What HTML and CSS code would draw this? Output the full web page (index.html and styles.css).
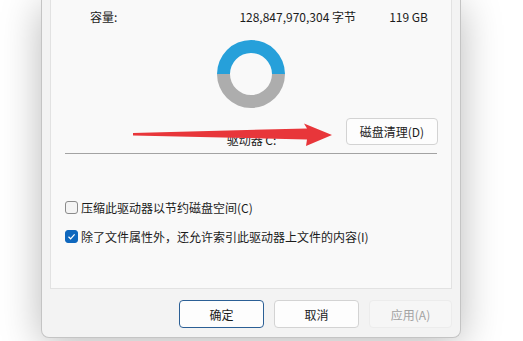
FILE: index.html
```html
<!DOCTYPE html>
<html lang="zh-CN">
<head>
    <meta charset="UTF-8">
    <title>本地磁盘 (C:) 属性</title>
    <link rel="stylesheet" href="styles.css">
</head>
<body>
    <div class="screen">
        <div class="window">
            <div class="panel">
                <div class="cap-row">
                    <span>容量:</span>
                    <span class="bytes">128,847,970,304 字节</span>
                    <span class="gb">119 GB</span>
                </div>

                <svg class="donut" width="68" height="68" viewBox="0 0 68 68">
                    <path d="M0 34 A34 34 0 0 1 68 34 L55 34 A21 21 0 0 0 13 34 Z" fill="#26a0da"/>
                    <path d="M0 34 A34 34 0 0 0 68 34 L55 34 A21 21 0 0 1 13 34 Z" fill="#adadad"/>
                </svg>

                <div class="drive-row">
                    <span class="drive-label">驱动器 C:</span>
                    <button class="btn cleanup">磁盘清理(D)</button>
                </div>

                <div class="sep"></div>

                <div class="options">
                    <label class="check">
                        <span class="box"></span>
                        压缩此驱动器以节约磁盘空间(C)
                    </label>
                    <label class="check">
                        <span class="box checked">
                            <svg width="9" height="9" viewBox="0 0 9 9"><path d="M1.5 4.8 L3.6 6.8 L7.6 2.4" fill="none" stroke="#fff" stroke-width="1.2"/></svg>
                        </span>
                        除了文件属性外，还允许索引此驱动器上文件的内容(I)
                    </label>
                </div>
            </div>

            <div class="footer">
                <button class="btn default">确定</button>
                <button class="btn">取消</button>
                <button class="btn disabled">应用(A)</button>
            </div>
        </div>

        <svg class="arrow" width="210" height="30" viewBox="0 0 210 30">
            <path d="M3 13 L177 8.5 L174 3.5 L202 15 L176 26 L177 19.5 L3 15.5 Z" fill="#e8363a"/>
        </svg>
    </div>
</body>
</html>
```

FILE: styles.css
```css
body {
    margin: 0;
    background: #fff;
    font-family: "Noto Sans CJK SC", "Noto Sans", sans-serif;
    font-size: 12px;
    color: #1b1b1b;
    overflow: hidden;
}
.screen {
    position: relative;
    width: 523px;
    height: 341px;
    padding-left: 41px;
    box-sizing: border-box;
}
.window {
    width: 420px;
    height: 338px;
    box-sizing: border-box;
    background: #f3f3f3;
    border: 1px solid #c4c4c4;
    border-top: none;
    border-radius: 0 0 8px 8px;
    box-shadow: 0 6px 40px rgba(0, 0, 0, 0.28);
    padding: 0 8px 0 8px;
    display: flex;
    flex-direction: column;
}
.panel {
    height: 289px;
    box-sizing: border-box;
    background: #f9f9f9;
    border: 1px solid #e2e2e2;
    border-top: none;
    padding: 0 14px;
    display: flex;
    flex-direction: column;
}
.cap-row {
    margin-top: 8px;
    height: 18px;
    line-height: 18px;
    padding-left: 25px;
    padding-right: 9px;
    display: grid;
    grid-template-columns: 1fr auto 72px;
}
.cap-row .gb {
    text-align: right;
}
.donut {
    display: block;
    margin: 14px auto 0;
}
.drive-row {
    margin-top: 10px;
    display: grid;
    grid-template-columns: 1fr auto 1fr;
    margin-right: -1px;
}
.drive-label {
    grid-column: 2;
    align-self: end;
    line-height: 14px;
    margin-bottom: -2px;
}
.cleanup {
    grid-column: 3;
    justify-self: end;
    width: 92px;
}
.btn {
    height: 27px;
    padding: 0;
    font-family: inherit;
    font-size: 12px;
    color: #1b1b1b;
    background: #fdfdfd;
    border: 1px solid #d3d3d3;
    border-radius: 4px;
}
.sep {
    margin-top: 8px;
    height: 1px;
    background: #a3a3a3;
}
.options {
    margin-top: 43px;
    display: flex;
    flex-direction: column;
    gap: 9px;
}
.check {
    height: 20px;
    display: flex;
    align-items: center;
    gap: 3px;
}
.box {
    width: 13px;
    height: 13px;
    box-sizing: border-box;
    border: 1px solid #8b8b8b;
    border-radius: 3px;
    background: #f4f4f4;
    display: flex;
    align-items: center;
    justify-content: center;
}
.box.checked {
    background: #0f67bd;
    border-color: #0f67bd;
}
.footer {
    margin-top: 11px;
    display: flex;
    justify-content: flex-end;
    gap: 10px;
}
.footer .btn {
    width: 85px;
    height: 28px;
}
.footer .btn:last-child {
    width: 83px;
}
.btn.default {
    border-color: #2b5f95;
}
.btn.disabled {
    background: #f6f6f6;
    border-color: #ececec;
    color: #a3a3a3;
}
.arrow {
    position: absolute;
    left: 130px;
    top: 120px;
}
```
